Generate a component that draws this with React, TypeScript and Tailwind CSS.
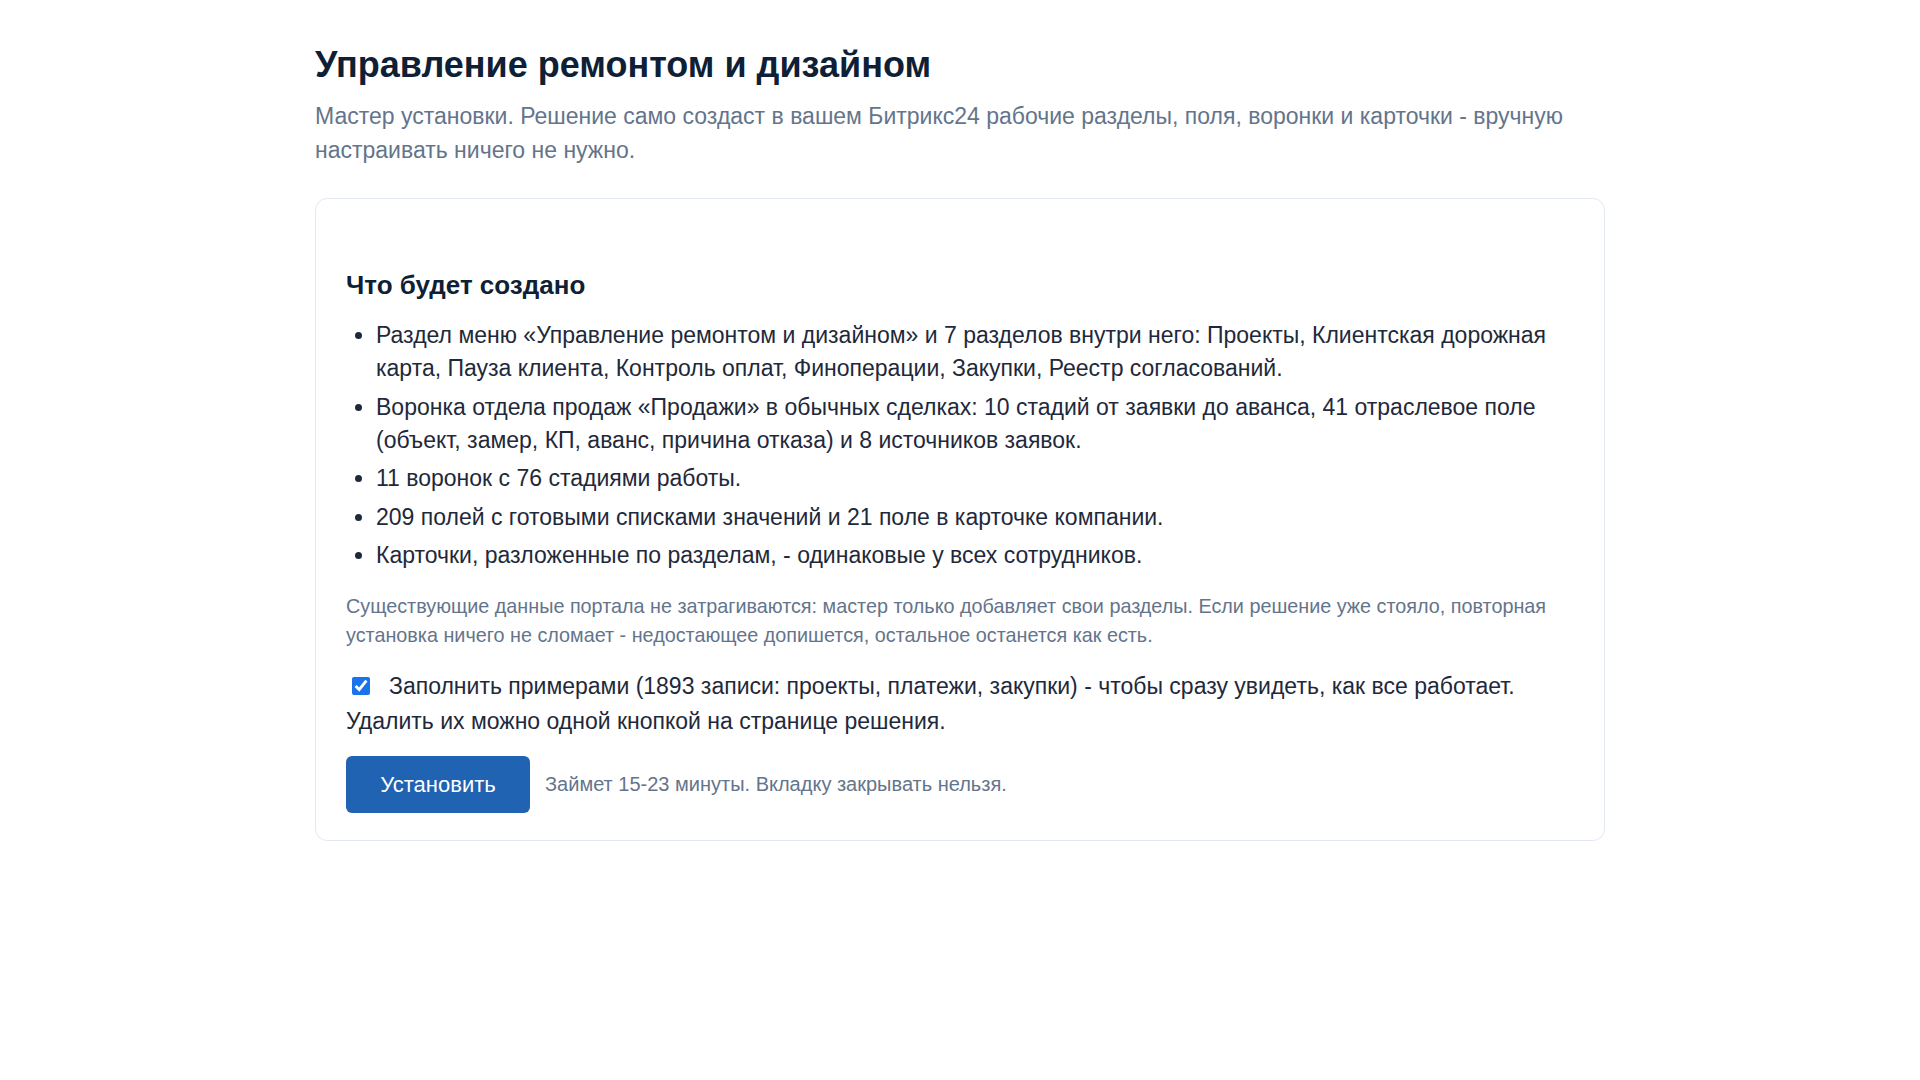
import { useState } from "react"

const items = [
  "Раздел меню «Управление ремонтом и дизайном» и 7 разделов внутри него: Проекты, Клиентская дорожная карта, Пауза клиента, Контроль оплат, Финоперации, Закупки, Реестр согласований.",
  "Воронка отдела продаж «Продажи» в обычных сделках: 10 стадий от заявки до аванса, 41 отраслевое поле (объект, замер, КП, аванс, причина отказа) и 8 источников заявок.",
  "11 воронок с 76 стадиями работы.",
  "209 полей с готовыми списками значений и 21 поле в карточке компании.",
  "Карточки, разложенные по разделам, - одинаковые у всех сотрудников.",
]

const App = () => {
  const [demo, setDemo] = useState(true)

  return (
    <div className="min-h-screen bg-white font-['Liberation_Sans',Arial,sans-serif] text-[#1e293b]">
      <section className="mx-auto w-[1290px] pt-[43px] pb-10">
        <header className="mb-[31px]">
          <h1 className="text-[36px] font-bold leading-[1.2] text-[#0f1f35]">Управление ремонтом и дизайном</h1>
          <p className="mt-[13px] text-[23px] leading-[34px] text-[#64748b]">
            Мастер установки. Решение само создаст в вашем Битрикс24 рабочие разделы, поля, воронки и карточки - вручную настраивать ничего не нужно.
          </p>
        </header>

        <div className="rounded-[12px] border border-[#e2e8f0] bg-white px-[30px] pt-[30px] pb-[27px]">
          <h2 className="mt-[40px] text-[26px] font-bold leading-[32px] text-[#0f1f35]">Что будет создано</h2>

          <ul className="mt-[18px] list-disc space-y-[5.5px] pl-[30px] text-[23px] leading-[33px] text-[#1e293b]">
            {items.map((item) => (
              <li key={item}>{item}</li>
            ))}
          </ul>

          <p className="mt-[19.5px] text-[19.8px] leading-[29px] text-[#64748b]">
            Существующие данные портала не затрагиваются: мастер только добавляет свои разделы. Если решение уже стояло, повторная установка ничего не сломает - недостающее допишется, остальное останется как есть.
          </p>

          <label className="mt-[19px] block text-[23px] leading-[35px] text-[#1e293b]">
            <input
              type="checkbox"
              checked={demo}
              onChange={(e) => setDemo(e.target.checked)}
              className="mr-[19px] ml-[6px] inline-block h-[18px] w-[18px] align-[-1px] accent-[#1a73e8]"
            />
            Заполнить примерами (1893 записи: проекты, платежи, закупки) - чтобы сразу увидеть, как все работает. Удалить их можно одной кнопкой на странице решения.
          </label>

          <div className="mt-[17px] flex items-center gap-[15px]">
            <button className="h-[57px] w-[184px] rounded-[6px] bg-[#1f63b2] text-[22px] text-white">Установить</button>
            <span className="text-[20px] text-[#64748b]">Займет 15-23 минуты. Вкладку закрывать нельзя.</span>
          </div>
        </div>
      </section>
    </div>
  )
}

export default App
